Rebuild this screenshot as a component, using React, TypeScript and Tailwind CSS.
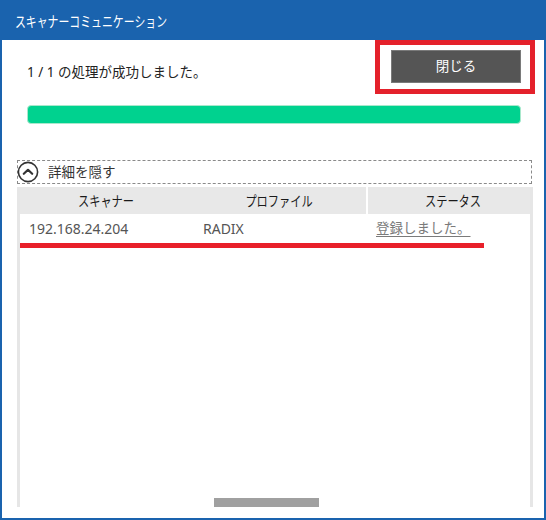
import React from 'react';

const jp = { fontFamily: '"Noto Sans", "Noto Sans CJK JP", sans-serif' };

function ChevronCircle() {
  return (
    <svg width="22" height="22" viewBox="0 0 22 22" className="shrink-0">
      <circle cx="11" cy="11" r="9.6" fill="white" stroke="#333" strokeWidth="1.6" />
      <path d="M6.8 12.8 L11 8.8 L15.2 12.8" fill="none" stroke="#333" strokeWidth="2.2" strokeLinecap="round" strokeLinejoin="round" />
    </svg>
  );
}

export default function App() {
  return (
    <div className="w-[546px] h-[520px] bg-[#1a63ae] flex flex-col overflow-hidden" style={jp}>
      {/* Title bar */}
      <div className="h-[40px] shrink-0 flex items-center pl-[15px] pt-[4px] text-white text-[14.5px]">
        <span className="inline-block origin-left scale-x-[0.75] whitespace-nowrap">スキャナーコミュニケーション</span>
      </div>

      {/* Body */}
      <div className="flex-1 bg-white mx-[2px] mb-[2px] flex flex-col">
        {/* Status + close */}
        <div className="h-[54px] flex items-center justify-between">
          <span className="pl-[25px] pt-[10px] text-[13.5px] text-[#222]">1 / 1 の処理が成功しました。</span>
          <div className="mr-[9px] w-[160px] h-[54px] border-[5px] border-[#e4212b] flex items-center justify-center pl-[2px] pb-[1px]">
            <button className="w-[130px] h-[33px] bg-[#555555] border border-[#7a7a7a] text-white text-[13.5px]">
              閉じる
            </button>
          </div>
        </div>

        {/* Progress */}
        <div className="ml-[25px] mt-[11px] w-[494px] h-[19px] rounded-[4px] border border-[#a9e8cc] bg-[#00d28f]" />

        {/* Details toggle */}
        <div className="ml-[15px] mt-[36px] w-[515px] h-[24px] border border-dashed border-[#8a8a8a] flex items-center">
          <div className="-ml-[1px]">
            <ChevronCircle />
          </div>
          <span className="ml-[9px] text-[13.5px] text-[#333]">詳細を隠す</span>
        </div>

        {/* Table */}
        <div className="ml-[15px] mt-[3px] w-[516px] h-[320px] border-x-[3px] border-[#e6e6e6] flex flex-col overflow-hidden">
          <div className="h-[27px] shrink-0 bg-[#e8e8e8] flex text-[14px] text-[#1a1a1a]">
            <div className="w-[172px] shrink-0 flex items-center justify-center">
              <span className="inline-block scale-x-[0.8] whitespace-nowrap">スキャナー</span>
            </div>
            <div className="w-[176px] shrink-0 flex items-center justify-center border-r-2 border-white">
              <span className="inline-block scale-x-[0.8] whitespace-nowrap">プロファイル</span>
            </div>
            <div className="w-[170px] shrink-0 flex items-center justify-center">
              <span className="inline-block scale-x-[0.8] whitespace-nowrap">ステータス</span>
            </div>
          </div>
          <div className="h-[28px] shrink-0 flex items-center text-[14px] text-[#555]">
            <div className="w-[172px] shrink-0 pl-[9px]">192.168.24.204</div>
            <div className="w-[176px] shrink-0 pl-[11px]">RADIX</div>
            <div className="w-[170px] shrink-0 pl-[8px] text-[13.5px] text-[#7a7a7a] underline underline-offset-[3px]">登録しました。</div>
          </div>
          <div className="mt-[1px] w-[464px] h-[5px] bg-[#e8202a] shrink-0" />
          <div className="mt-auto ml-[194px] w-[105px] h-[9px] bg-[#a0a0a0]" />
        </div>
      </div>
    </div>
  );
}
